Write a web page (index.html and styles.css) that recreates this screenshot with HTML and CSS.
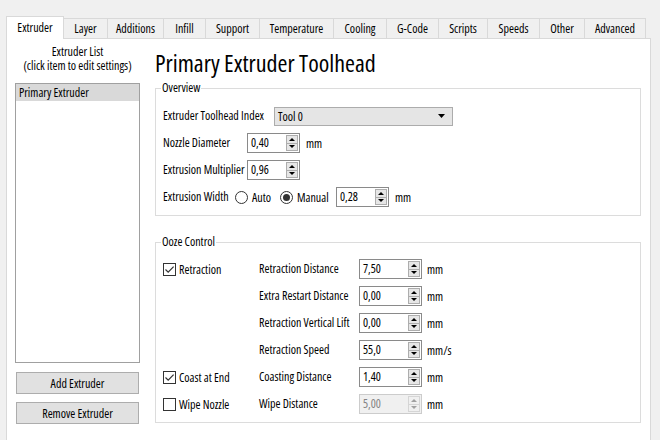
FILE: index.html
```html
<!DOCTYPE html>
<html>
<head>
<meta charset="utf-8">
<link rel="stylesheet" href="styles.css">
</head>
<body>
<div class="tabs">
  <div class="tab active">Extruder</div>
  <div class="tab">Layer</div>
  <div class="tab">Additions</div>
  <div class="tab">Infill</div>
  <div class="tab">Support</div>
  <div class="tab">Temperature</div>
  <div class="tab">Cooling</div>
  <div class="tab">G-Code</div>
  <div class="tab">Scripts</div>
  <div class="tab">Speeds</div>
  <div class="tab">Other</div>
  <div class="tab">Advanced</div>
</div>
<div class="pane">
  <div class="left">
    <div class="list-title">Extruder List<br>(click item to edit settings)</div>
    <div class="listbox"><div class="item sel">Primary Extruder</div></div>
    <button class="btn add">Add Extruder</button>
    <button class="btn remove">Remove Extruder</button>
  </div>
  <div class="right">
    <h1 class="heading">Primary Extruder Toolhead</h1>
    <div class="group overview">
      <div class="group-title">Overview</div>
      <div class="rows">
        <div class="row">
          <span class="lbl lbl-index">Extruder Toolhead Index</span>
          <div class="combo"><span class="combo-text">Tool 0</span><svg class="combo-arrow" width="7" height="4" viewBox="0 0 7 4"><path d="M0 0h7L3.5 4z" fill="#000"/></svg></div>
        </div>
        <div class="row">
          <span class="lbl lbl-short">Nozzle Diameter</span>
          <div class="spin small"><span class="val">0,40</span><span class="arrows"><span class="up"></span><span class="down"></span></span></div>
          <span class="unit">mm</span>
        </div>
        <div class="row">
          <span class="lbl lbl-short">Extrusion Multiplier</span>
          <div class="spin small"><span class="val">0,96</span><span class="arrows"><span class="up"></span><span class="down"></span></span></div>
        </div>
        <div class="row">
          <span class="lbl lbl-width">Extrusion Width</span>
          <span class="opt opt-auto"><span class="radio"></span>Auto</span>
          <span class="opt opt-manual"><span class="radio checked"></span>Manual</span>
          <div class="spin small"><span class="val">0,28</span><span class="arrows"><span class="up"></span><span class="down"></span></span></div>
          <span class="unit">mm</span>
        </div>
      </div>
    </div>
    <div class="group ooze">
      <div class="group-title">Ooze Control</div>
      <div class="ooze-grid">
        <span class="check-opt"><span class="check on"><svg width="11" height="11" viewBox="0 0 11 11"><path d="M1.5 5.5L4.2 8.2L9.6 2.6" fill="none" stroke="#333" stroke-width="1.2"/></svg></span>Retraction</span>
        <span class="lbl">Retraction Distance</span>
        <div class="spin"><span class="val">7,50</span><span class="arrows"><span class="up"></span><span class="down"></span></span></div>
        <span class="unit">mm</span>

        <span></span>
        <span class="lbl">Extra Restart Distance</span>
        <div class="spin"><span class="val">0,00</span><span class="arrows"><span class="up"></span><span class="down"></span></span></div>
        <span class="unit">mm</span>

        <span></span>
        <span class="lbl">Retraction Vertical Lift</span>
        <div class="spin"><span class="val">0,00</span><span class="arrows"><span class="up"></span><span class="down"></span></span></div>
        <span class="unit">mm</span>

        <span></span>
        <span class="lbl">Retraction Speed</span>
        <div class="spin"><span class="val">55,0</span><span class="arrows"><span class="up"></span><span class="down"></span></span></div>
        <span class="unit">mm/s</span>

        <span class="check-opt"><span class="check on"><svg width="11" height="11" viewBox="0 0 11 11"><path d="M1.5 5.5L4.2 8.2L9.6 2.6" fill="none" stroke="#333" stroke-width="1.2"/></svg></span>Coast at End</span>
        <span class="lbl">Coasting Distance</span>
        <div class="spin"><span class="val">1,40</span><span class="arrows"><span class="up"></span><span class="down"></span></span></div>
        <span class="unit">mm</span>

        <span class="check-opt"><span class="check"></span>Wipe Nozzle</span>
        <span class="lbl">Wipe Distance</span>
        <div class="spin disabled"><span class="val">5,00</span><span class="arrows"><span class="up"></span><span class="down"></span></span></div>
        <span class="unit">mm</span>
      </div>
    </div>
  </div>
</div>
</body>
</html>
```
FILE: styles.css
```css
* { box-sizing: border-box; }
html, body { margin: 0; padding: 0; }
body {
  width: 660px;
  height: 440px;
  overflow: hidden;
  background: #f0f0f0;
  color: #000;
  font-family: "Open Sans", "Liberation Sans", sans-serif;
  font-stretch: 82%;
  font-size: 12px;
}
button { font-family: inherit; font-stretch: inherit; }

/* Tabs */
.tabs {
  display: flex;
  align-items: flex-end;
  height: 38px;
  padding: 16px 0 0 6px;
}
.tab {
  height: 20px;
  line-height: 19px;
  padding: 0;
  margin-left: -1px;
  text-align: center;
  border: 1px solid #d9d9d9;
  border-bottom: none;
  background: #f0f0f0;
  white-space: nowrap;
}
.tab:nth-child(1) { width: 58px; margin-left: 0; }
.tab:nth-child(2) { width: 45px; }
.tab:nth-child(3) { width: 57px; }
.tab:nth-child(4) { width: 43px; }
.tab:nth-child(5) { width: 55px; }
.tab:nth-child(6) { width: 75px; }
.tab:nth-child(7) { width: 54px; }
.tab:nth-child(8) { width: 53px; }
.tab:nth-child(9) { width: 50px; }
.tab:nth-child(10) { width: 53px; }
.tab:nth-child(11) { width: 46px; }
.tab:nth-child(12) { width: 62px; }
.tab.active {
  position: relative;
  z-index: 2;
  height: 23px;
  line-height: 21px;
  margin-bottom: -1px;
  background: #fff;
}

/* Pane */
.pane {
  display: flex;
  gap: 15px;
  width: 645px;
  height: 410px;
  margin-left: 6px;
  padding: 6px 8px 0 8px;
  background: #fff;
  border: 1px solid #d9d9d9;
}
.left {
  width: 125px;
  display: flex;
  flex-direction: column;
}
.list-title {
  text-align: center;
  line-height: 14px;
  white-space: nowrap;
}
.listbox {
  height: 280px;
  margin-top: 10px;
  border: 1px solid #a0a0a0;
}
.item {
  height: 17px;
  line-height: 17px;
  padding-left: 3px;
}
.item.sel { background: #d9d9d9; }
.btn {
  height: 22px;
  margin: 9px 1px 0 1px;
  padding: 0;
  border: 1px solid #adadad;
  background: #e1e1e1;
  font-size: 12px;
  color: #000;
}
.btn.remove { margin-top: 8px; }

.right { width: 486px; }
.heading {
  margin: 5px 0 0 0;
  font-size: 24px;
  font-stretch: 77%;
  line-height: 26px;
  font-weight: normal;
}

/* Group boxes */
.group {
  border: 1px solid #dcdcdc;
  padding: 0 0 8px 7px;
}
.overview { margin-top: 12px; }
.ooze { margin-top: 26px; }
.group-title {
  width: fit-content;
  margin: -8px 0 0 -2px;
  padding: 0 1px;
  line-height: 14px;
  background: #fff;
}
.rows {
  display: flex;
  flex-direction: column;
  gap: 7px;
  margin-top: 11px;
}
.row {
  display: flex;
  align-items: center;
  height: 20px;
}
.lbl { line-height: 20px; white-space: nowrap; }
.lbl-index { width: 111px; }
.lbl-short { width: 84px; }
.lbl-width { width: 72px; }
.unit { margin-left: 6px; }

.combo {
  display: flex;
  align-items: center;
  width: 179px;
  height: 19px;
  border: 1px solid #acacac;
  background: #e5e5e5;
}
.combo-text { flex: 1; padding-left: 3px; }
.combo-arrow { margin-right: 7px; }

.opt { display: flex; align-items: center; }
.opt-auto { width: 45px; }
.opt-manual { width: 56px; }
.radio {
  width: 13px;
  height: 13px;
  margin-right: 4px;
  border: 1px solid #333;
  border-radius: 50%;
  background: #fff;
  display: flex;
  align-items: center;
  justify-content: center;
}
.radio.checked::after {
  content: "";
  width: 7px;
  height: 7px;
  border-radius: 50%;
  background: #333;
}

/* Spin boxes */
.spin {
  display: flex;
  width: 63px;
  height: 20px;
  border: 1px solid #8a8a8a;
  background: #fff;
}
.spin.small { width: 53px; }
.val {
  flex: 1;
  padding-left: 3px;
  line-height: 18px;
}
.arrows {
  display: flex;
  flex-direction: column;
  width: 12px;
  margin: 1px 1px 1px 0;
  border: 1px solid #adadad;
  background: #e6e6e6;
}
.up, .down {
  flex: 1;
  display: flex;
  align-items: center;
  justify-content: center;
}
.up { border-bottom: 1px solid #adadad; }
.up::after, .down::after {
  content: "";
  width: 0;
  height: 0;
  border-left: 3px solid transparent;
  border-right: 3px solid transparent;
}
.up::after { border-bottom: 3px solid #000; }
.down::after { border-top: 3px solid #000; }
.spin.disabled { border-color: #cccccc; background: #f0f0f0; color: #838383; }
.spin.disabled .arrows { border-color: #d5d5d5; background: #f0f0f0; }
.spin.disabled .up { border-bottom-color: #d5d5d5; }
.spin.disabled .up::after { border-bottom-color: #a0a0a0; }
.spin.disabled .down::after { border-top-color: #a0a0a0; }

/* Ooze grid */
.ooze-grid {
  display: grid;
  grid-template-columns: 96px 100px 63px auto;
  grid-auto-rows: 20px;
  row-gap: 7px;
  align-items: center;
  margin-top: 10px;
}
.ooze-grid .unit { margin-left: 5px; }
.check-opt { display: flex; align-items: center; }
.check {
  width: 13px;
  height: 13px;
  margin-right: 3px;
  border: 1px solid #333;
  background: #fff;
  display: flex;
  align-items: center;
  justify-content: center;
}
```
